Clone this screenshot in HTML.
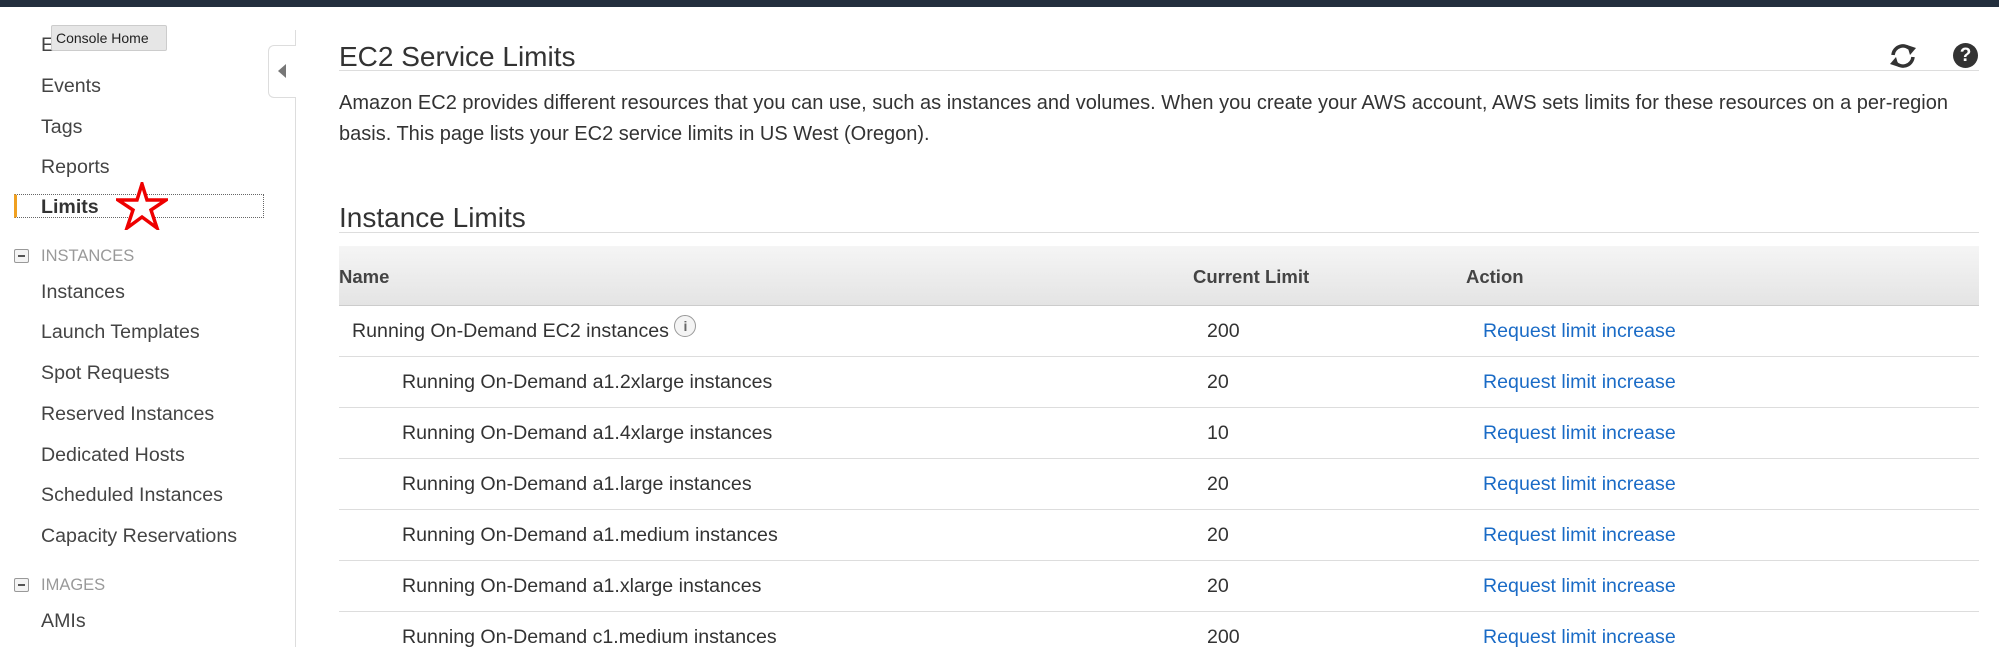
<!DOCTYPE html>
<html><head><style>
*{margin:0;padding:0;box-sizing:border-box}
body{width:1999px;height:647px;overflow:hidden;background:#fff;font-family:"Liberation Sans",sans-serif;color:#333;position:relative}
.abs{position:absolute;white-space:nowrap}
.top{left:0;top:0;width:1999px;height:7px;background:#232f3e}
.nav{font-size:19.6px;color:#444;left:41px;line-height:24px}
.sec{font-size:16.5px;color:#999;left:41px}
.minus{left:14px;width:15px;height:14px;border:1px solid #999;border-radius:2px;background:#f4f4f4}
.minus:after{content:"";position:absolute;left:3px;top:5px;width:7px;height:2px;background:#555}
.row{left:339px;width:1640px;height:51px;border-bottom:1px solid #ddd;font-size:19.6px}
.row span{position:absolute;top:14px}
.row .n{left:13px}.row .n2{left:63px}.row .l{left:868px}.row .a{left:1144px;color:#1a6bc6}
</style></head><body>
<div class="abs top"></div>
<div class="abs nav" style="top:33px">E<span style="opacity:0">ll</span>&nbsp;&nbsp;&nbsp;&nbsp;&nbsp;&nbsp;&nbsp;&nbsp;&nbsp;&nbsp;&nbsp;rd</div>
<div class="abs" style="left:51px;top:25px;width:116px;height:26px;background:#e6e6e6;border:1px solid #ccc;border-radius:2px;font-size:14px;color:#222;padding:4px 0 0 4px">Console Home</div>
<div class="abs nav" style="top:74px">Events</div>
<div class="abs nav" style="top:115px">Tags</div>
<div class="abs nav" style="top:155px">Reports</div>
<div class="abs" style="left:14px;top:194px;width:250px;height:24px;border:1px dotted #666;border-left:3px solid #f0a020"></div>
<div class="abs nav" style="top:195px;font-weight:bold;color:#333">Limits</div>
<svg class="abs" style="left:116px;top:182px" width="52" height="48" viewBox="0 0 52 48"><polygon points="26,2 31,18 50,18 35,28 41,46 26,35 11,46 17,28 2,18 21,18" fill="#fff" stroke="#e00" stroke-width="3.5"/></svg>
<div class="abs minus" style="top:249px"></div>
<div class="abs sec" style="top:247px">INSTANCES</div>
<div class="abs nav" style="top:280px">Instances</div>
<div class="abs nav" style="top:320px">Launch Templates</div>
<div class="abs nav" style="top:361px">Spot Requests</div>
<div class="abs nav" style="top:402px">Reserved Instances</div>
<div class="abs nav" style="top:443px">Dedicated Hosts</div>
<div class="abs nav" style="top:483px">Scheduled Instances</div>
<div class="abs nav" style="top:524px">Capacity Reservations</div>
<div class="abs minus" style="top:578px"></div>
<div class="abs sec" style="top:576px">IMAGES</div>
<div class="abs nav" style="top:609px">AMIs</div>
<div class="abs" style="left:295px;top:30px;width:1px;height:617px;background:#ddd"></div>
<div class="abs" style="left:268px;top:45px;width:28px;height:53px;border:1px solid #ddd;border-right:none;border-radius:6px 0 0 6px;background:#fff"></div>
<div class="abs" style="left:278px;top:64px;width:0;height:0;border-top:7px solid transparent;border-bottom:7px solid transparent;border-right:8px solid #777"></div>

<div class="abs" style="left:339px;top:41px;font-size:28px;color:#333">EC2 Service Limits</div>
<div class="abs" style="left:339px;top:70px;width:1640px;height:1px;background:#ddd"></div>
<svg class="abs" style="left:1888px;top:42px" width="30" height="28" viewBox="0 0 30 28"><path d="M5 13 A10 10 0 0 1 23 8" fill="none" stroke="#333" stroke-width="3.5"/><polygon points="19,3 28,6 22,13" fill="#333"/><path d="M25 15 A10 10 0 0 1 7 20" fill="none" stroke="#333" stroke-width="3.5"/><polygon points="11,25 2,22 8,15" fill="#333"/></svg>
<div class="abs" style="left:1953px;top:43px;width:25px;height:25px;border-radius:50%;background:#333;color:#fff;font-weight:bold;font-size:19px;text-align:center;line-height:25px">?</div>
<div class="abs" style="left:339px;top:88px;font-size:20px;line-height:31px;color:#333;white-space:normal;width:1640px">Amazon EC2 provides different resources that you can use, such as instances and volumes. When you create your AWS account, AWS sets limits for these resources on a <span style="white-space:nowrap">per-region</span> basis. This page lists your EC2 service limits in US West (Oregon).</div>
<div class="abs" style="left:339px;top:202px;font-size:28px;color:#333">Instance Limits</div>
<div class="abs" style="left:339px;top:232px;width:1640px;height:1px;background:#ddd"></div>
<div class="abs" style="left:339px;top:246px;width:1640px;height:60px;background:linear-gradient(#f5f5f5,#e4e4e4);border-bottom:1px solid #ccc;font-size:18.5px;font-weight:bold;color:#444">
<span style="position:absolute;left:0;top:20px">Name</span><span style="position:absolute;left:854px;top:20px">Current Limit</span><span style="position:absolute;left:1127px;top:20px">Action</span></div>
<div class="abs row" style="top:306px"><span class="n">Running On-Demand EC2 instances <span style="position:relative;top:-6px;display:inline-block;width:22px;height:22px;border:1px solid #999;border-radius:50%;font-size:14px;text-align:center;line-height:20px;color:#666;background:#f4f4f4;font-weight:bold">i</span></span><span class="l">200</span><span class="a">Request limit increase</span></div>
<div class="abs row" style="top:357px"><span class="n2">Running On-Demand a1.2xlarge instances</span><span class="l">20</span><span class="a">Request limit increase</span></div>
<div class="abs row" style="top:408px"><span class="n2">Running On-Demand a1.4xlarge instances</span><span class="l">10</span><span class="a">Request limit increase</span></div>
<div class="abs row" style="top:459px"><span class="n2">Running On-Demand a1.large instances</span><span class="l">20</span><span class="a">Request limit increase</span></div>
<div class="abs row" style="top:510px"><span class="n2">Running On-Demand a1.medium instances</span><span class="l">20</span><span class="a">Request limit increase</span></div>
<div class="abs row" style="top:561px"><span class="n2">Running On-Demand a1.xlarge instances</span><span class="l">20</span><span class="a">Request limit increase</span></div>
<div class="abs row" style="top:612px;border:none"><span class="n2">Running On-Demand c1.medium instances</span><span class="l">200</span><span class="a">Request limit increase</span></div>
</body></html>
